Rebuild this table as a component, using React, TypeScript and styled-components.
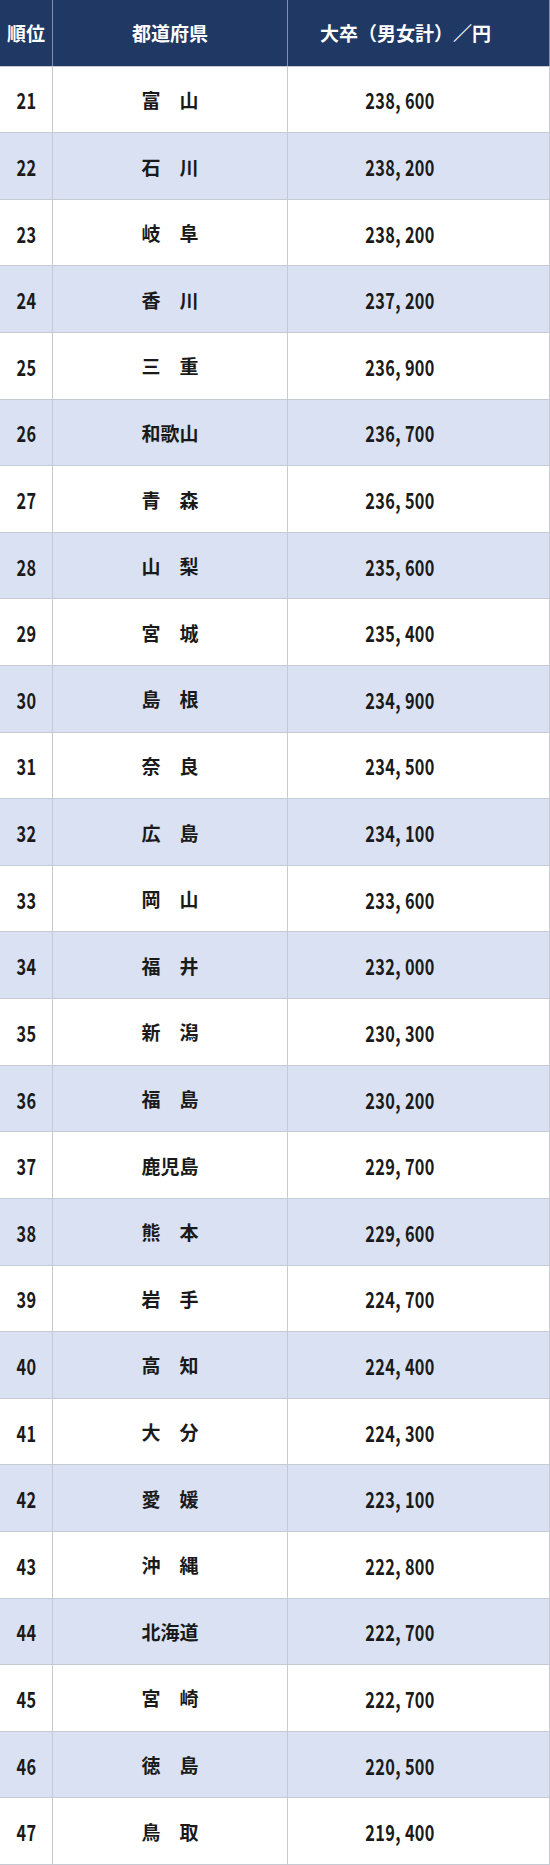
import * as React from "react";
import styled, { createGlobalStyle } from "styled-components";

const GlobalStyle = createGlobalStyle`
    html, body {
        margin: 0;
        padding: 0;
        background: #ffffff;
    }
    body {
        font-family: "Noto Sans CJK JP", "Noto Sans", sans-serif;
    }
`;

const rows: [number, string, string][] = [
    [21, "富　山", "238,600"],
    [22, "石　川", "238,200"],
    [23, "岐　阜", "238,200"],
    [24, "香　川", "237,200"],
    [25, "三　重", "236,900"],
    [26, "和歌山", "236,700"],
    [27, "青　森", "236,500"],
    [28, "山　梨", "235,600"],
    [29, "宮　城", "235,400"],
    [30, "島　根", "234,900"],
    [31, "奈　良", "234,500"],
    [32, "広　島", "234,100"],
    [33, "岡　山", "233,600"],
    [34, "福　井", "232,000"],
    [35, "新　潟", "230,300"],
    [36, "福　島", "230,200"],
    [37, "鹿児島", "229,700"],
    [38, "熊　本", "229,600"],
    [39, "岩　手", "224,700"],
    [40, "高　知", "224,400"],
    [41, "大　分", "224,300"],
    [42, "愛　媛", "223,100"],
    [43, "沖　縄", "222,800"],
    [44, "北海道", "222,700"],
    [45, "宮　崎", "222,700"],
    [46, "徳　島", "220,500"],
    [47, "鳥　取", "219,400"]
];

const Table = styled.div`
    box-sizing: border-box;
    width: 550px;
    height: 1865px;
    display: grid;
    grid-template-columns: 52px 234px 1fr;
    grid-template-rows: repeat(28, 1fr);
    gap: 1px;
    padding: 0 1px 1px 0;
    background: #c6cad2;
`;

const HeadCell = styled.div<{ $shift?: number }>`
    display: flex;
    align-items: center;
    justify-content: center;
    padding-right: ${p => p.$shift || 0}px;
    background: #1f3864;
    color: #ffffff;
    font-size: 19px;
    font-weight: 700;
    box-shadow: 1px 0 0 #8391ad;
`;

const Cell = styled.div<{ $striped: boolean; $shift?: number }>`
    display: flex;
    align-items: center;
    justify-content: center;
    padding-right: ${p => p.$shift || 0}px;
    background: ${p => (p.$striped ? "#d9e1f2" : "#ffffff")};
    color: #1a1a1a;
    font-size: 19px;
    font-weight: 700;
`;

const Num = styled.span`
    display: inline-block;
    font-size: 22px;
    font-weight: 700;
    transform: scaleX(0.74);
    letter-spacing: 0.5px;
`;

export default function App() {
    return (
        <>
            <GlobalStyle />
            <Table>
                <HeadCell>順位</HeadCell>
                <HeadCell>都道府県</HeadCell>
                <HeadCell $shift={26}>大卒（男女計）／円</HeadCell>
                {rows.map(([rank, pref, pay], i) => (
                    <React.Fragment key={rank}>
                        <Cell $striped={i % 2 === 1}>
                            <Num>{rank}</Num>
                        </Cell>
                        <Cell $striped={i % 2 === 1}>{pref}</Cell>
                        <Cell $striped={i % 2 === 1} $shift={36}>
                            <Num>{pay.replace(",", ", ")}</Num>
                        </Cell>
                    </React.Fragment>
                ))}
            </Table>
        </>
    );
}
